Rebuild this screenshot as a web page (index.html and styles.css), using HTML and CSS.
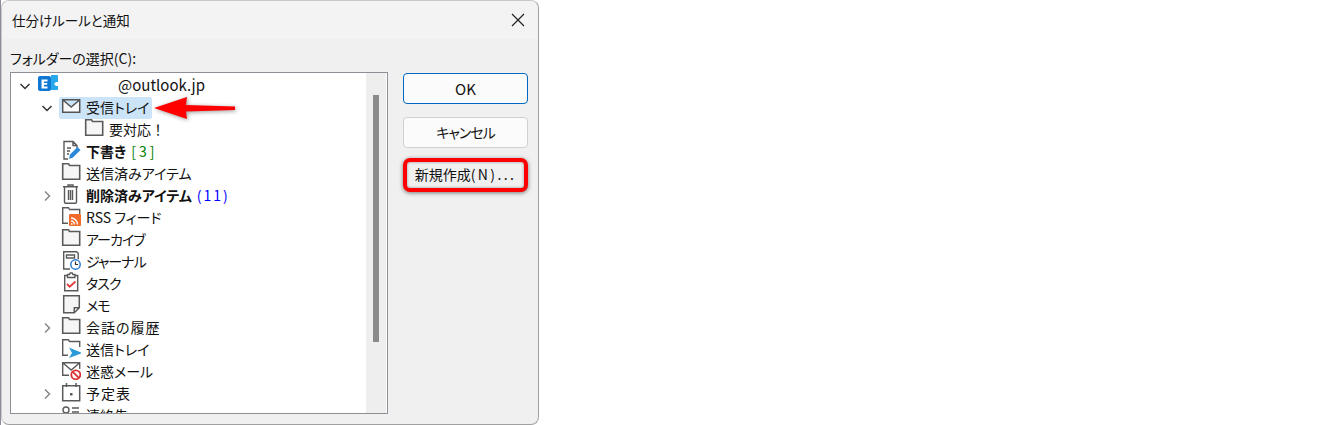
FILE: index.html
```html
<!DOCTYPE html>
<html lang="ja">
<head>
    <meta charset="UTF-8">
    <title>仕分けルールと通知</title>
    <link rel="stylesheet" href="styles.css">
</head>
<body>
    <div class="desktop">
    <div class="dialog">
        <div class="title-bar">
            <span class="title">仕分けルールと通知</span>
            <svg class="close" width="14" height="14" viewBox="0 0 14 14"><path d="M1 1l12 12M13 1L1 13" stroke="#222" stroke-width="1.2" fill="none"/></svg>
        </div>
        <div class="content">
            <div class="left-pane">
                <div class="label">フォルダーの選択(C):</div>
                <div class="tree">
                    <div class="tree-list">
                        <div class="row root">
                            <svg class="chevron" width="12" height="12" viewBox="0 0 12 12"><path d="M1.500 4L6 8.500 10.500 4" stroke="#333" stroke-width="1.500" fill="none"/></svg>
                            <svg class="icon" width="22" height="20" viewBox="0 0 22 20"><path d="M14 1h6a1 1 0 0 1 1 1v6h-2l-2 2 2 2h2v3a1 1 0 0 1-1 1h-6z" fill="#28a8ea"/><rect x="1" y="2" width="13" height="15" rx="2" fill="#0f78d4"/><path d="M4.500 5.500h6v2H7v1.500h3.200v1.800H7v1.700h3.500v2h-6z" fill="#fff"/></svg>
                            <span class="name account">@outlook.jp</span>
                        </div>
                        <div class="row depth-1">
                            <svg class="chevron" width="12" height="12" viewBox="0 0 12 12"><path d="M1.500 4L6 8.500 10.500 4" stroke="#333" stroke-width="1.500" fill="none"/></svg>
                            <span class="selected">
                                <svg class="icon" width="20" height="20" viewBox="0 0 20 20"><path d="M1.700 2.700h17v12.600h-17zM2 3l8.200 7L18.500 3" stroke="#555" stroke-width="1.500" fill="#fbfbfb"/></svg>
                                <span class="name">受信トレイ</span>
                            </span>
                        </div>
                        <div class="row depth-2">
                            <svg class="icon" width="20" height="20" viewBox="0 0 20 20"><path d="M1.700 4.500V17.300h17V3.500H8.500L7.500 1.700H1.700v2.800" stroke="#5a5a5a" stroke-width="1.600" fill="#f6f6f6"/></svg>
                            <span class="name full-width">要対応！</span>
                        </div>
                        <div class="row depth-1 no-child">
                            <svg class="icon" width="20" height="20" viewBox="0 0 20 20"><path d="M7 19H3V1.500h9l4 4v3M12 1.500v4h4M6 8h4M6 11h3M6 14h2" stroke="#5a5a5a" stroke-width="1.400" fill="none"/><path d="M8 19l1-4.500 7.500-7.500 3 3-7.500 7.500z" fill="#2b88d8"/></svg>
                            <span class="name"><b>下書き</b> <span class="count-green">[3]</span></span>
                        </div>
                        <div class="row depth-1 no-child">
                            <svg class="icon" width="20" height="20" viewBox="0 0 20 20"><path d="M1.700 4.500V17.300h17V3.500H8.500L7.500 1.700H1.700v2.800" stroke="#5a5a5a" stroke-width="1.600" fill="#f6f6f6"/></svg>
                            <span class="name">送信済みアイテム</span>
                        </div>
                        <div class="row depth-1">
                            <svg class="chevron" width="12" height="12" viewBox="0 0 12 12"><path d="M4 1.500L8.500 6 4 10.500" stroke="#888" stroke-width="1.500" fill="none"/></svg>
                            <svg class="icon" width="20" height="20" viewBox="0 0 20 20"><path d="M2 2.700h15M7 2.700V1h5v1.700M3.500 2.700v15.600a1 1 0 0 0 1 1h10a1 1 0 0 0 1-1V2.700M7.500 6v10M9.500 6v10M11.500 6v10" stroke="#5a5a5a" stroke-width="1.400" fill="none"/></svg>
                            <span class="name"><b>削除済みアイテム</b> <span class="count-blue">(11)</span></span>
                        </div>
                        <div class="row depth-1 no-child">
                            <svg class="icon" width="20" height="20" viewBox="0 0 20 20"><path d="M7 17.300H1.700V1.700h5.800l1 1.800h10.200V8" stroke="#5a5a5a" stroke-width="1.400" fill="none"/><rect x="8" y="8" width="12" height="12" rx="1" fill="#f26b2a"/><path d="M10 18h1.500M10 15a3.500 3.500 0 0 1 3.500 3.500M10 12a6.500 6.500 0 0 1 6.500 6.500" stroke="#fff" stroke-width="1.400" fill="none"/></svg>
                            <span class="name">RSS フィード</span>
                        </div>
                        <div class="row depth-1 no-child">
                            <svg class="icon" width="20" height="20" viewBox="0 0 20 20"><path d="M1.700 4.500V17.300h17V3.500H8.500L7.500 1.700H1.700v2.800" stroke="#5a5a5a" stroke-width="1.600" fill="#f6f6f6"/></svg>
                            <span class="name kana">アーカイブ</span>
                        </div>
                        <div class="row depth-1 no-child">
                            <svg class="icon" width="20" height="20" viewBox="0 0 20 20"><path d="M9 19H2.700V1.700h13l1.500 1.500v6M5.500 5h8v3h-8z" stroke="#5a5a5a" stroke-width="1.400" fill="none"/><circle cx="14.500" cy="14.500" r="4.700" fill="#fff" stroke="#2b7cd3" stroke-width="1.500"/><path d="M14.500 11.500v3h2.500" stroke="#333" stroke-width="1.200" fill="none"/></svg>
                            <span class="name kana">ジャーナル</span>
                        </div>
                        <div class="row depth-1 no-child">
                            <svg class="icon" width="20" height="20" viewBox="0 0 20 20"><path d="M6.500 3.500H3.700v15.300h13V3.500h-2.800M6.500 5.500v-3h2l.7-1.500h2l.7 1.500h2v3z" stroke="#5a5a5a" stroke-width="1.400" fill="none"/><path d="M6 12l2.700 2.700L14.500 9.500" stroke="#e03c3c" stroke-width="1.800" fill="none"/></svg>
                            <span class="name kana">タスク</span>
                        </div>
                        <div class="row depth-1 no-child">
                            <svg class="icon" width="20" height="20" viewBox="0 0 20 20"><path d="M2.700 1.700h15.600v12l-5 5H2.700zM18.300 13.700h-5v5" stroke="#5a5a5a" stroke-width="1.500" fill="#f6f6f6"/></svg>
                            <span class="name kana">メモ</span>
                        </div>
                        <div class="row depth-1">
                            <svg class="chevron" width="12" height="12" viewBox="0 0 12 12"><path d="M4 1.500L8.500 6 4 10.500" stroke="#888" stroke-width="1.500" fill="none"/></svg>
                            <svg class="icon" width="20" height="20" viewBox="0 0 20 20"><path d="M1.700 4.500V17.300h17V3.500H8.500L7.500 1.700H1.700v2.800" stroke="#5a5a5a" stroke-width="1.600" fill="#f6f6f6"/></svg>
                            <span class="name kanji">会話の履歴</span>
                        </div>
                        <div class="row depth-1 no-child">
                            <svg class="icon" width="20" height="20" viewBox="0 0 20 20"><path d="M7 17.300H1.700V1.700h5.800l1 1.800h10.200V9" stroke="#5a5a5a" stroke-width="1.400" fill="none"/><path d="M8 9.500L21 15 8 20l3-5z" fill="#2b9ad8"/></svg>
                            <span class="name">送信トレイ</span>
                        </div>
                        <div class="row depth-1 no-child">
                            <svg class="icon" width="20" height="20" viewBox="0 0 20 20"><path d="M8 15.300H1.700V2.700h17v6M2 3l8.200 7L18.500 3" stroke="#5a5a5a" stroke-width="1.400" fill="none"/><circle cx="14.800" cy="14.800" r="4.500" fill="#fff" stroke="#e02f2f" stroke-width="1.800"/><path d="M11.800 11.800l6 6" stroke="#e02f2f" stroke-width="1.800"/></svg>
                            <span class="name">迷惑メール</span>
                        </div>
                        <div class="row depth-1">
                            <svg class="chevron" width="12" height="12" viewBox="0 0 12 12"><path d="M4 1.500L8.500 6 4 10.500" stroke="#888" stroke-width="1.500" fill="none"/></svg>
                            <svg class="icon" width="20" height="20" viewBox="0 0 20 20"><path d="M1.700 3.700h17v15h-17zM5.500 1v4M15 1v4" stroke="#5a5a5a" stroke-width="1.500" fill="none"/><rect x="9" y="11" width="2.500" height="2.500" fill="#5a5a5a"/></svg>
                            <span class="name kanji">予定表</span>
                        </div>
                        <div class="row depth-1 no-child">
                            <svg class="icon" width="20" height="20" viewBox="0 0 20 20"><circle cx="5" cy="6" r="3" stroke="#5a5a5a" stroke-width="1.400" fill="none"/><path d="M11 4h7M11 8h7" stroke="#5a5a5a" stroke-width="1.400"/></svg>
                            <span class="name">連絡先</span>
                        </div>
                    </div>
                    <div class="scrollbar"><div class="thumb"></div></div>
                </div>
            </div>
            <div class="buttons">
                <button type="button" class="btn btn-default">OK</button>
                <button type="button" class="btn btn-cancel">キャンセル</button>
                <button type="button" class="btn btn-marked">新規作成<span class="wide">(N)...</span></button>
            </div>
        </div>
        <svg class="arrow" width="84" height="28" viewBox="0 0 84 28"><path d="M1 12L34 1l-1 8 49 1.500v3.500L33 15.500l1 7.500z" fill="#f00"/></svg>
    </div>
    </div>
</body>
</html>
```
FILE: styles.css
```css
* {
    box-sizing: border-box;
}
body {
    margin: 0;
    background-color: #fff;
    font-family: "Noto Sans CJK JP", "Liberation Sans", sans-serif;
    font-size: 14px;
    font-feature-settings: "palt";
    color: #111;
}
.desktop {
    width: 539px;
    height: 425px;
    border-left: 1px solid #8a8f99;
}
.dialog {
    position: relative;
    width: 538px;
    height: 425px;
    background-color: #f0f0f0;
    border: 1px solid #a0a0a0;
    border-top-color: #c8c8c8;
    border-left-color: #c8c8c8;
    border-radius: 8px;
}
.title-bar {
    display: flex;
    justify-content: space-between;
    align-items: center;
    height: 38px;
    padding: 0 13px 0 10px;
    background-color: #f3f3f3;
    border-radius: 8px 8px 0 0;
}
.title {
    font-size: 13.5px;
}
.content {
    display: flex;
    padding: 0 10px 0 8px;
}
.left-pane {
    width: 378px;
}
.label {
    height: 33px;
    padding-top: 9px;
    line-height: 20px;
}
.tree {
    display: flex;
    height: 342px;
    background-color: #fff;
    border: 1px solid #8e8e96;
    overflow: hidden;
}
.tree-list {
    flex: 1;
    padding-top: 2px;
}
.row {
    display: flex;
    align-items: center;
    height: 22px;
    padding-left: 30px;
    white-space: nowrap;
}
.row.root {
    padding-left: 8px;
}
.row.no-child {
    padding-left: 50px;
}
.row.depth-2 {
    padding-left: 73px;
}
.chevron {
    margin-right: 8px;
    flex: none;
}
.root .chevron {
    margin-right: 6px;
}
.icon {
    align-self: flex-start;
    margin-top: -1px;
    margin-right: 5px;
    flex: none;
}
.name {
    padding-bottom: 2px;
    line-height: 18px;
}
.kana {
    letter-spacing: -1px;
}
.kanji {
    letter-spacing: 1px;
}
.full-width {
    font-feature-settings: normal;
}
.account {
    margin-left: 54px;
    font-size: 15px;
}
.selected {
    display: flex;
    align-items: center;
    height: 22px;
    margin-left: -2px;
    padding: 0 3px 0 2px;
    background-color: #cce4f7;
    border-radius: 2px;
}
.selected .icon {
    margin-top: 0;
}
.count-green {
    margin-left: 2px;
    color: #008000;
    letter-spacing: 3px;
}
.count-blue {
    margin-left: 2px;
    color: #0000ff;
    letter-spacing: 2px;
}
.scrollbar {
    flex: none;
    width: 20px;
    margin-right: 1px;
    padding: 22px 7px 0;
    background-color: #eeeeee;
}
.thumb {
    width: 6px;
    height: 247px;
    background-color: #8a8a8a;
}
.buttons {
    display: flex;
    flex-direction: column;
    gap: 13px;
    width: 125px;
    margin-left: 15px;
    padding-top: 34px;
}
.btn {
    width: 125px;
    height: 31px;
    padding: 0;
    background-color: #fbfbfb;
    border: 1px solid #d0d0d0;
    border-radius: 4px;
    font-family: inherit;
    font-feature-settings: inherit;
    font-size: 14px;
    color: #111;
}
.btn-default {
    border-color: #0067c0;
    font-size: 15px;
}
.btn-cancel {
    padding-bottom: 2px;
    letter-spacing: -1px;
}
.btn-marked {
    height: 34px;
    margin-top: -3px;
    padding-bottom: 2px;
    background-color: #f0f0f0;
    border: 4px solid #f00;
    border-radius: 7px;
    box-shadow: 0 1px 4px rgba(0, 0, 0, 0.5), inset 0 0 3px rgba(0, 0, 0, 0.4);
}
.wide {
    letter-spacing: 2.4px;
}
.arrow {
    position: absolute;
    left: 151px;
    top: 95px;
    filter: drop-shadow(1px 1px 2px rgba(0, 0, 0, 0.4));
}
```
